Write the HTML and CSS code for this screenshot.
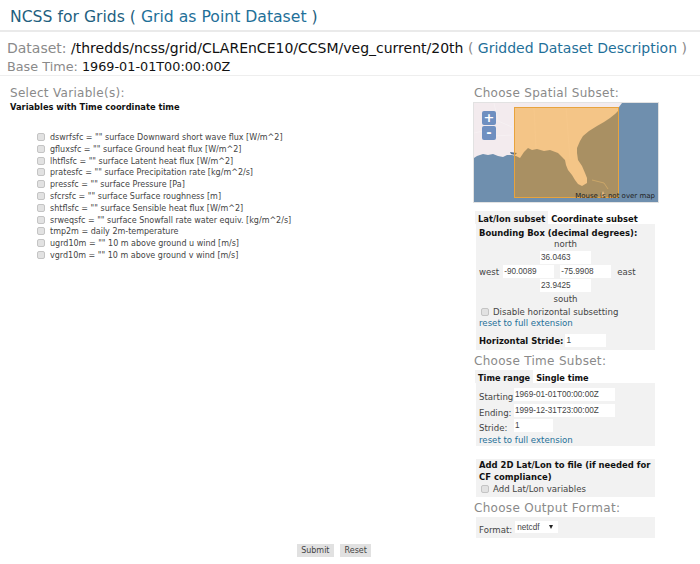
FILE: index.html
```html
<!DOCTYPE html>
<html>
<head>
    <title>NCSS for Grids</title>
    <link rel="stylesheet" href="styles.css">
</head>
<body>
    <!-- Cabecera -->
    <h1 class="title">NCSS for Grids ( <a href="#">Grid as Point Dataset</a> )</h1>
    <div class="dataset">
        <div class="dataset-line"><span class="muted">Dataset:</span> /thredds/ncss/grid/CLAREnCE10/CCSM/veg_current/20th <span class="muted">(</span> <a href="#">Gridded Dataset Description</a> <span class="muted">)</span></div>
        <div class="base-line"><span class="muted">Base Time:</span> 1969-01-01T00:00:00Z</div>
    </div>

    <form class="columns">
        <!-- Variables -->
        <div class="left-col">
            <h2 class="section-title">Select Variable(s):</h2>
            <h3 class="group-title">Variables with Time coordinate time</h3>
            <ul class="var-list">
                <li><input type="checkbox" class="check">dswrfsfc = "" surface Downward short wave flux [W/m^2]</li>
                <li><input type="checkbox" class="check">gfluxsfc = "" surface Ground heat flux [W/m^2]</li>
                <li><input type="checkbox" class="check">lhtflsfc = "" surface Latent heat flux [W/m^2]</li>
                <li><input type="checkbox" class="check">pratesfc = "" surface Precipitation rate [kg/m^2/s]</li>
                <li><input type="checkbox" class="check">pressfc = "" surface Pressure [Pa]</li>
                <li><input type="checkbox" class="check">sfcrsfc = "" surface Surface roughness [m]</li>
                <li><input type="checkbox" class="check">shtflsfc = "" surface Sensible heat flux [W/m^2]</li>
                <li><input type="checkbox" class="check">srweqsfc = "" surface Snowfall rate water equiv. [kg/m^2/s]</li>
                <li><input type="checkbox" class="check">tmp2m = daily 2m-temperature</li>
                <li><input type="checkbox" class="check">ugrd10m = "" 10 m above ground u wind [m/s]</li>
                <li><input type="checkbox" class="check">vgrd10m = "" 10 m above ground v wind [m/s]</li>
            </ul>
        </div>

        <!-- Subconjuntos -->
        <div class="right-col">
            <h2 class="section-title">Choose Spatial Subset:</h2>
            <div class="map">
                <svg class="map-svg" viewBox="0 0 184 99" width="184" height="99">
                    <rect width="184" height="99" fill="#6f8fae"/>
                    <path d="M0 0V55L3 53L9 51L14 52L19 51L24 53L29 54L33 52L38 52L42 53L46 55L50 49L54 45L58 47L63 46L70 48L76 47L84 50L88 54L91 57L92 62L94 67L98 72L101 77L104 81L108 83L113 80L113 75L111 70L108 63L104 57L103 50L103 45L106 38L109 33L115 28L123 23L130 19L136 15L141 11L144 8L145 4L148 0Z" fill="#f3ebee"/>
                    <path d="M0 30L14 27L20 33L38 32M20 0L24 18L38 24M60 4L62 46M92 4L96 56" fill="none" stroke="#fff" stroke-width=".6" opacity=".45"/>
                    <path d="M36 49L43 50L41 52L37 51Z" fill="#54708f"/>
                    <path d="M118 77L130 80L134 86" fill="none" stroke="#e8dcc0" stroke-width=".7" opacity=".7"/>
                    <path d="M126 94L129 88L132 94Z" fill="#f3ebee" opacity=".7"/>
                    <rect x="40.5" y="4.5" width="104" height="90" fill="rgba(245,145,0,.43)" stroke="#e8a33d" stroke-width="1"/>
                </svg>
                <div class="zoom-box">
                    <span class="zoom-btn">+</span>
                    <span class="zoom-btn">-</span>
                </div>
                <div class="mouse-pos">Mouse is not over map</div>
            </div>

            <div class="tabs spatial-tabs">
                <span class="tab active">Lat/lon subset</span>
                <span class="tab">Coordinate subset</span>
            </div>
            <div class="panel bbox-panel">
                <div class="strong">Bounding Box (decimal degrees):</div>
                <div class="bbox-row">north</div>
                <div class="bbox-row"><input class="field coord" value="36.0463"></div>
                <div class="bbox-row bbox-mid">
                    <span>west</span>
                    <input class="field coord" value="-90.0089">
                    <input class="field coord" value="-75.9908">
                    <span>east</span>
                </div>
                <div class="bbox-row"><input class="field coord" value="23.9425"></div>
                <div class="bbox-row">south</div>
                <div class="check-row"><input type="checkbox" class="check">Disable horizontal subsetting</div>
                <a href="#" class="reset-link">reset to full extension</a>
                <div class="stride-row"><span class="strong">Horizontal Stride:</span><input class="field stride" value="1"></div>
            </div>

            <h2 class="section-title time-title">Choose Time Subset:</h2>
            <div class="tabs">
                <span class="tab active">Time range</span>
                <span class="tab">Single time</span>
            </div>
            <div class="panel time-panel">
                <div class="time-row"><label>Starting</label><input class="field time" value="1969-01-01T00:00:00Z"></div>
                <div class="time-row"><label>Ending:</label><input class="field time" value="1999-12-31T23:00:00Z"></div>
                <div class="time-row"><label>Stride:</label><input class="field stride-time" value="1"></div>
                <a href="#" class="reset-link">reset to full extension</a>
            </div>

            <div class="panel latlon-panel">
                <div class="strong">Add 2D Lat/Lon to file (if needed for CF compliance)</div>
                <div class="check-row"><input type="checkbox" class="check">Add Lat/Lon variables</div>
            </div>

            <h2 class="section-title format-title">Choose Output Format:</h2>
            <div class="panel format-panel">
                <label>Format:</label>
                <span class="select-wrap">
                    <select class="format-select"><option>netcdf</option></select>
                </span>
            </div>
        </div>
    </form>

    <div class="actions">
        <button type="button" class="btn">Submit</button>
        <button type="button" class="btn">Reset</button>
    </div>
</body>
</html>
```

FILE: styles.css
```css
html, body {
    margin: 0;
    padding: 0;
    background-color: #fff;
}

body {
    font-family: "DejaVu Sans", Verdana, sans-serif;
    font-size: 9px;
    color: #333;
    height: 564px;
    overflow: hidden;
}

a {
    color: #1f7099;
    text-decoration: none;
}

h1, h2, h3, ul {
    margin: 0;
    padding: 0;
    font-weight: normal;
}

.title {
    font-size: 15.65px;
    line-height: 20px;
    padding: 7px 0 3px 10px;
    color: #1f5f80;
    border-bottom: 2px solid #eaeaea;
}

.dataset {
    padding: 7px 0 1px 7px;
    border-bottom: 1px solid #eeeeee;
    font-size: 14px;
    color: #111;
}

.dataset-line {
    line-height: 18px;
}

.base-line {
    font-size: 12.8px;
    line-height: 17px;
    padding-top: 1px;
    margin-bottom: -1px;
}

.muted {
    color: #8a8a8a;
}

.columns {
    display: flex;
}

.left-col {
    width: 474px;
    padding: 9px 0 0 10px;
    box-sizing: border-box;
}

.right-col {
    width: 181px;
    padding-top: 9px;
}

.section-title {
    font-size: 12px;
    line-height: 16px;
    color: #8a8a8a;
    letter-spacing: .3px;
}

.group-title {
    font-size: 8.3px;
    font-weight: bold;
    line-height: 12px;
    color: #111;
}

.var-list {
    list-style: none;
    margin: 19px 0 0 27px;
}

.var-list li {
    font-size: 8px;
    line-height: 11.8px;
    height: 11.8px;
    white-space: nowrap;
    color: #444;
}

.check {
    appearance: none;
    width: 8px;
    height: 8px;
    margin: 0 5px 0 0;
    background-color: #e2e2e2;
    border: 1px solid #c4c4c4;
    border-radius: 2px;
    box-sizing: border-box;
    vertical-align: -1px;
}

.map {
    position: relative;
    width: 184px;
    height: 99px;
    margin-top: 2px;
    outline: 1px solid #e2e2e2;
}

.map-svg {
    display: block;
}

.zoom-box {
    position: absolute;
    left: 8px;
    top: 8px;
    width: 14px;
}

.zoom-btn {
    display: block;
    height: 14px;
    margin-bottom: 1px;
    background-color: #6f8fc0;
    border-radius: 2px;
    color: #fff;
    font-size: 13px;
    font-weight: bold;
    line-height: 13px;
    text-align: center;
}

.mouse-pos {
    position: absolute;
    right: 3px;
    bottom: 1px;
    font-size: 7px;
    line-height: 9px;
    color: #222;
}

.tabs {
    display: flex;
    margin-left: 1px;
    font-size: 8.2px;
    font-weight: bold;
    color: #111;
    line-height: 10px;
}

.spatial-tabs {
    margin-top: 9px;
    font-size: 8.4px;
}

.tab {
    padding: 3px 3px 0 3px;
}

.tab.active {
    background-color: #f2f2f2;
}

.panel {
    background-color: #f2f2f2;
    font-size: 8.6px;
    color: #444;
    padding: 0 3px;
    margin-left: 2px;
}

.strong {
    font-size: 8.45px;
    font-weight: bold;
    color: #111;
}

.bbox-panel {
    padding-top: 4px;
    height: 126px;
    box-sizing: border-box;
}

.bbox-row {
    display: flex;
    justify-content: center;
    align-items: center;
    gap: 5px;
    line-height: 12px;
    margin-bottom: 1px;
}

.bbox-mid {
    justify-content: flex-start;
    gap: 4px;
    margin-top: 1px;
}

.bbox-mid input + input {
    margin-left: 2px;
}

.bbox-mid input + span {
    margin-left: 2px;
}

.field {
    border: 0;
    padding: 0 1px;
    margin: 0;
    background-color: #fff;
    font-family: "Liberation Sans", Arial, sans-serif;
    font-size: 8.2px;
    color: #444;
    box-sizing: border-box;
    outline: 0;
}

.coord {
    width: 51px;
    height: 13px;
}

.check-row {
    line-height: 12px;
    white-space: nowrap;
}

.check-row .check {
    margin: 0 4px 0 2px;
}

.reset-link {
    display: block;
    line-height: 11px;
}

.stride-row {
    margin-top: 5px;
    display: flex;
    align-items: center;
    gap: 2px;
}

.stride {
    width: 41px;
    height: 13px;
}

.time-title {
    margin-top: 3px;
}

.time-title + .tabs {
    margin-top: 1px;
}

.time-panel {
    height: 63px;
    padding-top: 5px;
    box-sizing: border-box;
}

.time-row {
    display: flex;
    align-items: flex-start;
    height: 15.5px;
}

.time-row label {
    width: 35px;
    padding-top: 3px;
    line-height: 13px;
    white-space: nowrap;
}

.time {
    width: 101px;
    height: 13px;
}

.stride-time {
    width: 39px;
    height: 13px;
}

.latlon-panel {
    margin-top: 13px;
    height: 38px;
    padding-top: 1px;
    box-sizing: border-box;
    line-height: 11.5px;
}

.format-title {
    margin-top: 3px;
}

.format-panel {
    margin-top: 1px;
    height: 21px;
    display: flex;
    align-items: center;
    gap: 3px;
}

.format-panel label {
    padding-top: 4px;
}

.select-wrap {
    position: relative;
    display: block;
    height: 12px;
    margin-top: -1px;
}

.select-wrap::after {
    content: "";
    position: absolute;
    right: 5px;
    top: 4px;
    border-left: 2.5px solid transparent;
    border-right: 2.5px solid transparent;
    border-top: 4px solid #222;
}

.format-select {
    display: block;
    appearance: none;
    width: 43px;
    height: 12px;
    border: 0;
    padding: 0 2px;
    background-color: #fff;
    font-family: "Liberation Sans", Arial, sans-serif;
    font-size: 8.2px;
    color: #444;
}

.actions {
    display: flex;
    justify-content: center;
    gap: 6px;
    margin-top: 6px;
    padding-right: 32px;
}

.btn {
    height: 13px;
    padding: 0 4.5px;
    border: 0;
    background-color: #e1e1e1;
    font-family: "DejaVu Sans", Verdana, sans-serif;
    font-size: 8px;
    color: #444;
}
```
